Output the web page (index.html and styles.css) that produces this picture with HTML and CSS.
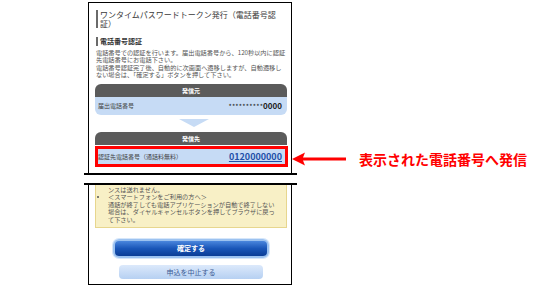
FILE: index.html
```html
<!DOCTYPE html>
<html lang="ja">
<head>
<meta charset="utf-8">
<link rel="stylesheet" href="styles.css">
</head>
<body>
<div class="page">
  <div class="shot">
    <div class="cut cut-top">
      <div class="frame frame-top">
        <h1 class="title">ワンタイムパスワードトークン発行（電話番号認証）</h1>
        <h2 class="heading">電話番号認証</h2>
        <p class="desc">電話番号での認証を行います。届出電話番号から、120秒以内に認証<br>先電話番号にお電話下さい。<br>電話番号認証完了後、自動的に次画面へ遷移しますが、自動遷移し<br>ない場合は、「確定する」ボタンを押して下さい。</p>
        <div class="box">
          <div class="box-head">発信元</div>
          <div class="box-row">
            <span class="label">届出電話番号</span>
            <span class="num"><span class="stars">**********</span><b>0000</b></span>
          </div>
        </div>
        <div class="pointer"></div>
        <div class="box">
          <div class="box-head">発信先</div>
          <div class="box-row hl">
            <span class="label">認証先電話番号（通話料無料）</span>
            <a class="tel">0120000000</a>
          </div>
        </div>
      </div>
    </div>
    <div class="cut cut-bottom">
      <div class="frame frame-bottom">
        <div class="notice">
          <ul class="notes">
            <li class="cont">ンスは送れません。</li>
            <li>＜スマートフォンをご利用の方へ＞<br>通話が終了しても電話アプリケーションが自動で終了しない<br>場合は、ダイヤルキャンセルボタンを押してブラウザに戻っ<br>て下さい。</li>
          </ul>
        </div>
        <div class="btn btn-main">確定する</div>
        <div class="btn btn-sub">申込を中止する</div>
      </div>
    </div>
  </div>
  <div class="note">
    <svg class="arrow" width="54" height="14" viewBox="0 0 54 14"><path d="M0 7 L13 0.5 L11 5.5 L54 5.5 L54 8.5 L11 8.5 L13 13.5 Z" fill="#ff0000"/></svg>
    <span class="note-text">表示された電話番号へ発信</span>
  </div>
</div>
</body>
</html>
```
FILE: styles.css
```css
html, body { margin: 0; padding: 0; background: #fff; }
body { font-family: "Noto Sans CJK JP", "Noto Sans", sans-serif; }
.page { display: flex; align-items: flex-start; padding: 2px 0 0 84px; }
.shot { width: 213px; display: flex; flex-direction: column; }
.cut-top { border-bottom: 2px solid #000; }
.cut-bottom { border-top: 2px solid #000; margin-top: 8px; }
.frame { margin: 0 5px 0 4px; border: 1px solid #000; box-sizing: border-box; overflow: hidden; }
.frame-top { border-bottom: none; height: 171px; }
.frame-bottom { border-top: none; height: 100px; }

.title { margin: 7px 11px 0 7px; padding-left: 2px; border-left: 2px solid #6a6a6a; font-size: 8px; line-height: 9px; font-weight: normal; color: #3a3a3a; }
.heading { margin: 9px 0 0 7px; padding-left: 2px; border-left: 2px solid #6a6a6a; font-size: 7px; line-height: 9px; font-weight: bold; color: #333; }
.desc { margin: 2.5px 0 0 7px; font-size: 6.2px; line-height: 7.5px; color: #555; white-space: nowrap; }

.box { margin: 5px 0 0 6px; width: 192px; }
.box-head { height: 13px; line-height: 13px; background: #5b5b5b; color: #fff; font-size: 6px; font-weight: bold; text-align: center; border-radius: 6px 6px 0 0; }
.box-row { height: 18px; background: #c6dbf5; border-radius: 0 0 6px 6px; display: flex; align-items: center; justify-content: space-between; padding: 0 5px 0 3px; }
.label { font-size: 6px; color: #444; }
.num { font-size: 8px; color: #222; display: flex; align-items: center; }
.stars { font-size: 7px; letter-spacing: 0.2px; }
.num b { font-weight: bold; }
.pointer { margin: 4px auto 0; width: 0; height: 0; border-left: 15px solid transparent; border-right: 15px solid transparent; border-top: 8px solid #c6dbf5; position: relative; left: 4px; }
.pointer + .box { margin-top: 5px; }
.box-row.hl { height: 21px; box-sizing: border-box; margin-top: 1px; border: 3px solid #ff0000; border-radius: 0; padding: 0 3px 0 0; width: 193px; }
.tel { font-size: 9px; font-weight: bold; color: #1f4fa8; text-decoration: underline; }

.notice { margin: -1px 0 0 6px; width: 192px; box-sizing: border-box; background: #f8f0c6; border: 1px solid #e7d68e; border-top: none; padding: 1.5px 0 3.5px 0; }
.notes { margin: 0; padding: 0 0 0 12px; font-size: 6.2px; line-height: 7.5px; color: #555; white-space: nowrap; }
.notes li.cont { list-style: none; }

.btn { box-sizing: border-box; text-align: center; font-size: 7px; border-radius: 6px; }
.btn-main { margin: 11px 0 0 24px; width: 156px; height: 19px; line-height: 15px; color: #fff; font-weight: bold; background: linear-gradient(#4a86dd, #1a56b8 50%, #0b3d96); border: 2px solid #9cc2f0; box-shadow: 0 0 0 1px #d5e6fa; }
.btn-sub { margin: 7px 0 0 30px; width: 144px; height: 14px; line-height: 14px; color: #3b5c95; background: linear-gradient(#dce9fb, #b6d0f2); border-radius: 4px; }

.note { display: flex; align-items: center; margin: 149px 0 0 -5px; }
.arrow { display: block; }
.note-text { margin-left: 13px; font-size: 14px; line-height: 16px; font-weight: bold; color: #ff0000; white-space: nowrap; }
```
